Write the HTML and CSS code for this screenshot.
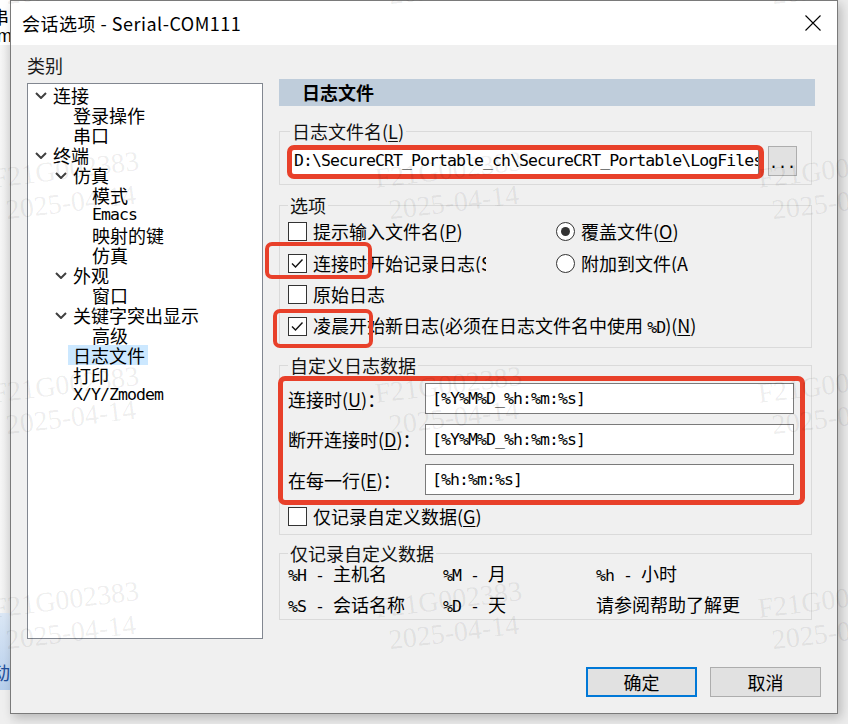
FILE: index.html
```html
<!DOCTYPE html>
<html lang="zh-CN">
<head>
<meta charset="utf-8">
<title>会话选项 - Serial-COM111</title>
<link rel="stylesheet" href="styles.css">
</head>
<body>
<div class="screen">
  <div class="backdrop">
    <div class="bd-top"><span class="bd-a">串</span><span class="bd-b">m</span></div>
    <div class="bd-fill"></div>
    <div class="bd-blue"><span class="bd-c">动</span></div>
    <div class="bd-rest"></div>
  </div>

  <div class="dialog">
    <div class="titlebar">
      <span class="title">会话选项 - Serial-COM111</span>
      <svg class="close" width="16" height="16" viewBox="0 0 16 16"><path d="M0.5 0.5 L15.5 15.5 M15.5 0.5 L0.5 15.5" stroke="#000" stroke-width="1.1" fill="none"/></svg>
    </div>

    <div class="content">
      <div class="main">
        <div class="nav">
          <div class="nav-label">类别</div>
          <div class="tree">
            <div class="row l0"><i class="chev"><svg width="12" height="7" viewBox="0 0 12 7"><polyline points="1,1 6,6 11,1" fill="none" stroke="#404040" stroke-width="2"/></svg></i><span class="txt">连接</span></div>
            <div class="row l1"><i class="chev"></i><span class="txt">登录操作</span></div>
            <div class="row l1"><i class="chev"></i><span class="txt">串口</span></div>
            <div class="row l0"><i class="chev"><svg width="12" height="7" viewBox="0 0 12 7"><polyline points="1,1 6,6 11,1" fill="none" stroke="#404040" stroke-width="2"/></svg></i><span class="txt">终端</span></div>
            <div class="row l1"><i class="chev"><svg width="12" height="7" viewBox="0 0 12 7"><polyline points="1,1 6,6 11,1" fill="none" stroke="#404040" stroke-width="2"/></svg></i><span class="txt">仿真</span></div>
            <div class="row l2"><i class="chev"></i><span class="txt">模式</span></div>
            <div class="row l2"><i class="chev"></i><span class="txt en">Emacs</span></div>
            <div class="row l2"><i class="chev"></i><span class="txt">映射的键</span></div>
            <div class="row l2"><i class="chev"></i><span class="txt">仿真</span></div>
            <div class="row l1"><i class="chev"><svg width="12" height="7" viewBox="0 0 12 7"><polyline points="1,1 6,6 11,1" fill="none" stroke="#404040" stroke-width="2"/></svg></i><span class="txt">外观</span></div>
            <div class="row l2"><i class="chev"></i><span class="txt">窗口</span></div>
            <div class="row l1"><i class="chev"><svg width="12" height="7" viewBox="0 0 12 7"><polyline points="1,1 6,6 11,1" fill="none" stroke="#404040" stroke-width="2"/></svg></i><span class="txt">关键字突出显示</span></div>
            <div class="row l2"><i class="chev"></i><span class="txt">高级</span></div>
            <div class="row l1"><i class="chev"></i><span class="txt selected">日志文件</span></div>
            <div class="row l1"><i class="chev"></i><span class="txt">打印</span></div>
            <div class="row l1"><i class="chev"></i><span class="txt en">X/Y/Zmodem</span></div>
          </div>
        </div>

        <div class="panel">
          <div class="panel-head">日志文件</div>

          <fieldset class="group g-file">
            <legend>日志文件名(<u>L</u>)</legend>
            <div class="file-row">
              <div class="field path">D:\SecureCRT_Portable_ch\SecureCRT_Portable\LogFiles\%S_%Y%M%D.log</div>
              <div class="browse">...</div>
              <div class="hl hl-path"></div>
            </div>
          </fieldset>

          <fieldset class="group g-opts">
            <legend>选项</legend>
            <div class="opts">
              <div class="opt"><span class="cb"></span><span class="lbl">提示输入文件名(<u>P</u>)</span></div>
              <div class="opt"><span class="rb on"></span><span class="lbl">覆盖文件(<u>O</u>)</span></div>
              <div class="opt"><span class="cb"><svg width="17" height="17" viewBox="0 0 17 17"><polyline points="3,8.5 6.5,12 13.5,4.5" fill="none" stroke="#111" stroke-width="1.4"/></svg></span><span class="lbl clip1">连接时开始记录日志(<u>S</u>)</span><div class="hl hl-cb2"></div></div>
              <div class="opt"><span class="rb"></span><span class="lbl clip2">附加到文件(<u>A</u>)</span></div>
              <div class="opt wide"><span class="cb"></span><span class="lbl">原始日志</span></div>
              <div class="opt wide"><span class="cb"><svg width="17" height="17" viewBox="0 0 17 17"><polyline points="3,8.5 6.5,12 13.5,4.5" fill="none" stroke="#111" stroke-width="1.4"/></svg></span><span class="lbl">凌晨开始新日志(必须在日志文件名中使用 <span class="en">%D</span>)(<u>N</u>)</span><div class="hl hl-cb4"></div></div>
            </div>
          </fieldset>

          <fieldset class="group g-custom">
            <legend>自定义日志数据</legend>
            <div class="custom">
              <span class="clabel">连接时(<u>U</u>)：</span>
              <div class="field cfield">[%Y%M%D_%h:%m:%s]</div>
              <span class="clabel">断开连接时(<u>D</u>)：</span>
              <div class="field cfield">[%Y%M%D_%h:%m:%s]</div>
              <span class="clabel">在每一行(<u>E</u>)：</span>
              <div class="field cfield">[%h:%m:%s]</div>
              <div class="hl hl-custom"></div>
            </div>
            <div class="opt only"><span class="cb"></span><span class="lbl">仅记录自定义数据(<u>G</u>)</span></div>
          </fieldset>

          <fieldset class="group g-legend">
            <legend>仅记录自定义数据</legend>
            <div class="keys">
              <span><span class="en">%H - </span>主机名</span>
              <span><span class="en">%M - </span>月</span>
              <span><span class="en">%h - </span>小时</span>
              <span><span class="en">%S - </span>会话名称</span>
              <span><span class="en">%D - </span>天</span>
              <span>请参阅帮助了解更</span>
            </div>
          </fieldset>
        </div>
      </div>

      <div class="footer">
        <button class="btn default">确定</button>
        <button class="btn">取消</button>
      </div>
    </div>
  </div>
</div>

<div class="marks-wrap">
  <div class="marks">
    <div class="wm">F21G002383<span>2025-04-14</span></div>
    <div class="wm">F21G002383<span>2025-04-14</span></div>
    <div class="wm">F21G002383<span>2025-04-14</span></div>
    <div class="wm">F21G002383<span>2025-04-14</span></div>
    <div class="wm">F21G002383<span>2025-04-14</span></div>
    <div class="wm">F21G002383<span>2025-04-14</span></div>
    <div class="wm">F21G002383<span>2025-04-14</span></div>
    <div class="wm">F21G002383<span>2025-04-14</span></div>
    <div class="wm">F21G002383<span>2025-04-14</span></div>
    <div class="wm">F21G002383<span>2025-04-14</span></div>
    <div class="wm">F21G002383<span>2025-04-14</span></div>
    <div class="wm">F21G002383<span>2025-04-14</span></div>
  </div>
</div>
</body>
</html>
```

FILE: styles.css
```css
* { box-sizing: border-box; }
html, body { margin: 0; padding: 0; }
body {
  width: 848px;
  height: 724px;
  overflow: hidden;
  position: relative;
  background: #ececec;
  font-family: "Noto Sans CJK SC", sans-serif;
  font-size: 18px;
  color: #000;
}
u { text-decoration: underline; text-underline-offset: 2px; }
.en { font-family: "DejaVu Sans Mono", monospace; font-size: 16.5px; letter-spacing: -0.93px; }

.screen { display: flex; height: 724px; }

/* background app strip on the left */
.backdrop { width: 10px; flex: none; display: flex; flex-direction: column; background: #f4f4f4; overflow: hidden; }
.bd-top { height: 45px; background: #fff; display: flex; flex-direction: column; line-height: 20px; }
.bd-a { margin-left: -9px; font-size: 18px; margin-top: 6px; }
.bd-b { margin-left: -3px; font-family: "Liberation Sans", sans-serif; font-size: 18px; }
.bd-fill { height: 568px; background: linear-gradient(90deg, #f6f6f6, #e6e6e6); }
.bd-blue { height: 77px; background: linear-gradient(#dbe7f5, #b7cfec); display: flex; align-items: flex-end; padding-bottom: 8px; }
.bd-c { margin-left: -8px; color: #1f4f9a; font-size: 18px; line-height: 20px; }
.bd-rest { flex: 1; background: #efefef; }

/* dialog */
.dialog {
  width: 828px;
  height: 714px;
  flex: none;
  border: 1px solid #7a7a7a;
  background: #f0f0f0;
  display: flex;
  flex-direction: column;
  box-shadow: 3px 4px 10px rgba(0, 0, 0, 0.22);
}
.titlebar {
  height: 44px;
  flex: none;
  background: #fff;
  display: flex;
  align-items: center;
  justify-content: space-between;
  padding: 0 16px 0 11px;
}
.title { font-size: 18px; letter-spacing: 0.5px; }
.close { display: block; }

.content { flex: 1; display: flex; flex-direction: column; }
.main { display: flex; gap: 16px; padding: 10px 0 0 16px; }

.nav { width: 236px; flex: none; }
.nav-label { height: 20px; line-height: 20px; color: #1a1a1a; }
.tree {
  margin-top: 8px;
  height: 556px;
  background: #fff;
  border: 1px solid #828790;
  padding-top: 1px;
}
.row { height: 20px; display: flex; align-items: center; line-height: 20px; white-space: nowrap; }
.row.l0 { padding-left: 7px; }
.row.l1 { padding-left: 27px; }
.row.l2 { padding-left: 46px; }
.chev { width: 12px; height: 20px; margin-right: 6px; display: flex; align-items: center; flex: none; }
.chev svg { display: block; }
.txt { height: 20px; }
.txt.selected { background: #cce8ff; padding: 0 3px 0 5px; margin-left: -5px; }

.panel { width: 536px; flex: none; margin-top: 24px; }
.panel-head {
  height: 27px;
  line-height: 27px;
  background: #bfcddb;
  padding-left: 23px;
  font-weight: bold;
}

.group {
  width: 533px;
  min-width: 0;
  margin: 0;
  border: 1px solid #dadada;
  padding: 0 8px;
}
.group legend {
  font-size: 18px;
  line-height: 20px;
  padding: 0 2px;
  color: #111;
}

.g-file { margin-top: 15px; padding: 5px 14px 8px 10px; }
.file-row { position: relative; display: flex; gap: 9px; height: 30px; }
.field {
  background: #fff;
  border: 1px solid #7a7a7a;
  font-family: "DejaVu Sans Mono", monospace;
  font-size: 16.5px;
  letter-spacing: -0.93px;
  white-space: nowrap;
  overflow: hidden;
}
.path { width: 469px; height: 30px; line-height: 28px; padding-left: 3px; }
.browse {
  width: 29px;
  height: 30px;
  background: #e1e1e1;
  border: 1px solid #adadad;
  font-family: "DejaVu Sans Mono", monospace;
  font-size: 15px;
  line-height: 32px;
  text-align: center;
}

.hl {
  position: absolute;
  border: 5px solid #e8402a;
  border-radius: 7px;
  pointer-events: none;
}
.hl-path { left: -3px; top: -1px; width: 477px; height: 34px; }

.g-opts { margin-top: 10px; padding-top: 7px; padding-bottom: 11px; }
.opts {
  display: grid;
  grid-template-columns: 268px 1fr;
  grid-template-rows: repeat(4, 19px);
  row-gap: 12.5px;
}
.opt { position: relative; display: flex; align-items: center; gap: 6px; white-space: nowrap; height: 19px; line-height: 19px; }
.opt.wide { grid-column: 1 / 3; }
.lbl { display: block; }
.clip1 { width: 173px; overflow: hidden; }
.clip2 { width: 107px; overflow: hidden; }
.cb {
  width: 19px;
  height: 19px;
  flex: none;
  border: 1px solid #333;
  background: #fff;
  display: flex;
  align-items: center;
  justify-content: center;
}
.cb svg { display: block; }
.rb {
  width: 19px;
  height: 19px;
  flex: none;
  border: 1px solid #333;
  border-radius: 50%;
  background: #fff;
  display: flex;
  align-items: center;
  justify-content: center;
}
.rb.on::after {
  content: "";
  width: 9px;
  height: 9px;
  border-radius: 50%;
  background: #333;
}
.hl-cb2 { left: -23px; top: -11.5px; width: 107px; height: 37px; border-width: 4.5px; }
.hl-cb4 { left: -15px; top: -7.5px; width: 100px; height: 39px; border-width: 4.5px; }

.g-custom { margin-top: 7.5px; padding-top: 8px; padding-bottom: 8px; }
.custom {
  position: relative;
  display: grid;
  grid-template-columns: 137px 369px;
  grid-auto-rows: 31px;
  row-gap: 9.5px;
  align-items: center;
}
.clabel { white-space: nowrap; line-height: 20px; }
.cfield { height: 31px; line-height: 29px; padding-left: 6px; }
.hl-custom { left: -10px; top: -7px; width: 527px; height: 129px; }
.opt.only { margin-top: 12px; }

.g-legend { margin-top: 8px; padding-top: 0; padding-bottom: 5px; }
.keys {
  display: grid;
  grid-template-columns: 155px 153px 1fr;
  grid-auto-rows: 20px;
  row-gap: 11px;
  line-height: 20px;
  white-space: nowrap;
}

.footer {
  display: flex;
  justify-content: flex-end;
  gap: 13px;
  padding: 28px 16px 16px 0;
}
.btn {
  width: 111px;
  height: 30px;
  margin: 0;
  padding: 0;
  background: #e1e1e1;
  border: 1px solid #adadad;
  font-family: "Noto Sans CJK SC", sans-serif;
  font-size: 18px;
  line-height: 26px;
  color: #000;
}
.btn.default { border: 2px solid #0078d7; }

/* watermark overlay */
.marks-wrap {
  position: absolute;
  left: 0;
  top: 0;
  width: 848px;
  height: 724px;
  overflow: hidden;
  pointer-events: none;
  z-index: 10;
}
.marks {
  margin: -53px 0 0 -10px;
  display: grid;
  grid-template-columns: repeat(3, 383px);
  grid-auto-rows: 215px;
}
.wm {
  transform: rotate(-7deg);
  transform-origin: 0 0;
  font-family: "Liberation Serif", serif;
  font-size: 28px;
  line-height: 33px;
  color: rgba(0, 0, 0, 0.075);
  white-space: nowrap;
}
.wm span { display: block; padding-left: 10px; }
```
